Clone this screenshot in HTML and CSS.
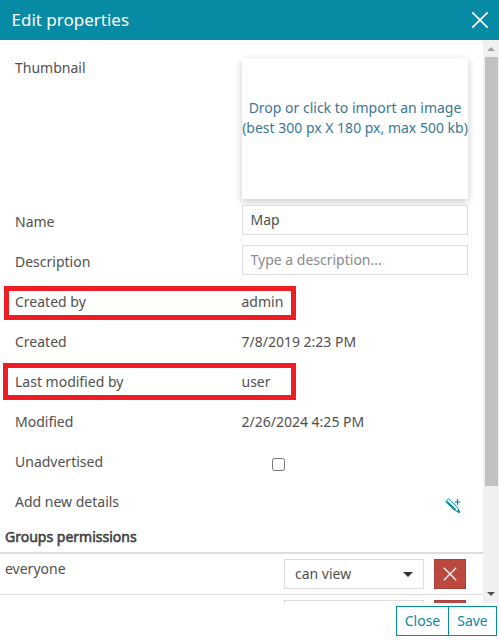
FILE: index.html
```html
<!DOCTYPE html>
<html lang="en">
<head>
<meta charset="utf-8">
<title>Edit properties</title>
<link rel="stylesheet" href="styles.css">
</head>
<body>
<div class="modal">
  <header class="header">
    <h1 class="title">Edit properties</h1>
    <button class="close" aria-label="Close dialog"><svg width="18" height="18" viewBox="0 0 18 18"><path d="M1.3 1.3l15.4 15.4M16.7 1.3L1.3 16.7"/></svg></button>
  </header>
  <div class="body">
    <main class="content">
      <div class="form">
        <div class="row row-thumb"><span class="label">Thumbnail</span><div class="thumb"><div>Drop or click to import an image<br>(best 300 px X 180 px, max 500 kb)</div></div></div>
        <div class="row"><span class="label">Name</span><input class="input" type="text" value="Map"></div>
        <div class="row"><span class="label">Description</span><input class="input" type="text" placeholder="Type a description..."></div>
        <div class="row"><span class="label">Created by</span><span class="value">admin</span><i class="mark mark-created"></i></div>
        <div class="row"><span class="label">Created</span><span class="value">7/8/2019 2:23 PM</span></div>
        <div class="row"><span class="label">Last modified by</span><span class="value">user</span><i class="mark mark-modified"></i></div>
        <div class="row"><span class="label">Modified</span><span class="value">2/26/2024 4:25 PM</span></div>
        <div class="row"><span class="label">Unadvertised</span><span class="check"></span></div>
        <div class="row"><span class="label">Add new details</span><svg class="pencil" width="16" height="16" viewBox="0 0 16 16"><path d="M.7 3.4L3.6.8l9 8.8 2 4.9-5-2.2z"/><path d="M1.8 3.6l8.6 8.2" stroke-width="2"/><path d="M12.5 12.5l1.9 1.9" stroke-width="2.2"/><path d="M12.5 1v6M9.5 4h6" stroke-width="1.2"/></svg></div>
      </div>
      <h2 class="groups">Groups permissions</h2>
      <div class="perm"><span class="who">everyone</span><div class="select">can view<i class="caret"></i></div><button class="remove" aria-label="Remove"><svg width="14" height="14" viewBox="0 0 14 14"><path d="M.8.8l12.4 12.4M13.2.8L.8 13.2"/></svg></button></div>
      <div class="perm"><span class="who"></span><div class="select"></div><button class="remove" aria-label="Remove"></button></div>
    </main>
    <div class="scrollbar"><i class="up"></i><i class="thumb-bar"></i><i class="down"></i></div>
  </div>
  <footer class="footer"><button class="btn btn-close">Close</button><button class="btn btn-save">Save</button></footer>
</div>
</body>
</html>
```
FILE: styles.css
```css
* { box-sizing: border-box; }
body { margin: 0; background: #fff; color: #505050; font: 14px/20px "Noto Sans", sans-serif; }
button, input { font: inherit; color: inherit; border-radius: 0; }
.modal { display: flex; flex-direction: column; height: 640px; overflow: hidden; }
.header { display: flex; flex: none; align-items: center; justify-content: space-between; height: 40px; padding: 0 10px 0 11.5px; background: #078aa3; color: #fff; }
.title { margin: 0; font-size: 17px; font-weight: 400; line-height: 20px; }
.close { display: flex; padding: 0; border: 0; background: none; }
.close svg { fill: none; stroke: #fff; stroke-width: 1.7; }
.body { display: flex; flex: none; height: 563px; overflow: hidden; }
.content { width: 483px; height: 563px; overflow: hidden; }
.form { padding: 11px 15px 0; }
.row { position: relative; display: flex; height: 30px; margin-bottom: 10px; }
.row-thumb { height: 148px; margin-bottom: 6px; }
.label { width: 227px; padding-top: 7px; }
.value { margin-left: -0.5px; padding-top: 7px; }
.thumb { width: 226px; height: 141px; margin-top: 7px; padding-top: 40px; color: #397795; text-align: center; white-space: nowrap; background: #fff; box-shadow: 0 3px 8px rgba(0,0,0,.16), 0 2px 8px rgba(0,0,0,.06); }
.input { width: 226px; height: 30px; padding: 0 8px 2px 7.5px; border: 1px solid #ddd; background: #fff; outline: none; }
.input::placeholder { color: #8b8b8b; opacity: 1; }
.mark { position: absolute; border: 5px solid #ef1c24; pointer-events: none; }
.mark-created { left: -11px; top: 1px; width: 292px; height: 34px; }
.mark-modified { left: -12px; top: -2px; width: 293px; height: 37px; }
.check { width: 13px; height: 13px; margin: 13px 0 0 30px; border: 1px solid #767676; border-radius: 2.5px; }
.pencil { margin: 13px 0 0 203px; fill: none; stroke: #078aa3; stroke-width: 1; }
.groups { margin: 0; padding: 2px 5px 5px; border-bottom: 2px solid #ddd; font-size: 14px; line-height: 20px; font-weight: 400; color: #404040; -webkit-text-stroke: .55px #404040; }
.perm { display: flex; height: 41px; padding: 5px 17px 5px 5px; border-bottom: 1px solid #ddd; }
.who { flex: 1; }
.select { display: flex; align-items: center; justify-content: space-between; width: 140px; height: 30px; margin-right: 10px; padding: 0 10px; border: 1px solid #ddd; }
.caret { border: 5px solid transparent; border-top-color: #333; border-bottom: 0; }
.remove { display: flex; align-items: center; justify-content: center; width: 32px; height: 30px; padding: 0; border: 1px solid #ad4039; background: #bb493f; }
.remove svg { fill: none; stroke: #fff; stroke-width: 1.3; }
.scrollbar { display: flex; flex-direction: column; align-items: center; width: 16px; background: #f0f0f0; padding: 7px 0; }
.up { border: 4px solid transparent; border-bottom-color: #a3a3a3; border-top: 0; }
.thumb-bar { width: 13px; height: 429px; margin-top: 6px; background: #c1c1c1; }
.down { margin-top: auto; border: 4px solid transparent; border-top-color: #505050; border-bottom: 0; }
.footer { display: flex; justify-content: flex-end; padding: 3px 2px 0 0; }
.btn { height: 30px; padding: 0; border: 1px solid #078aa3; background: #fff; color: #078aa3; }
.btn-close { width: 53px; }
.btn-save { width: 49px; margin-left: -1px; }
```
